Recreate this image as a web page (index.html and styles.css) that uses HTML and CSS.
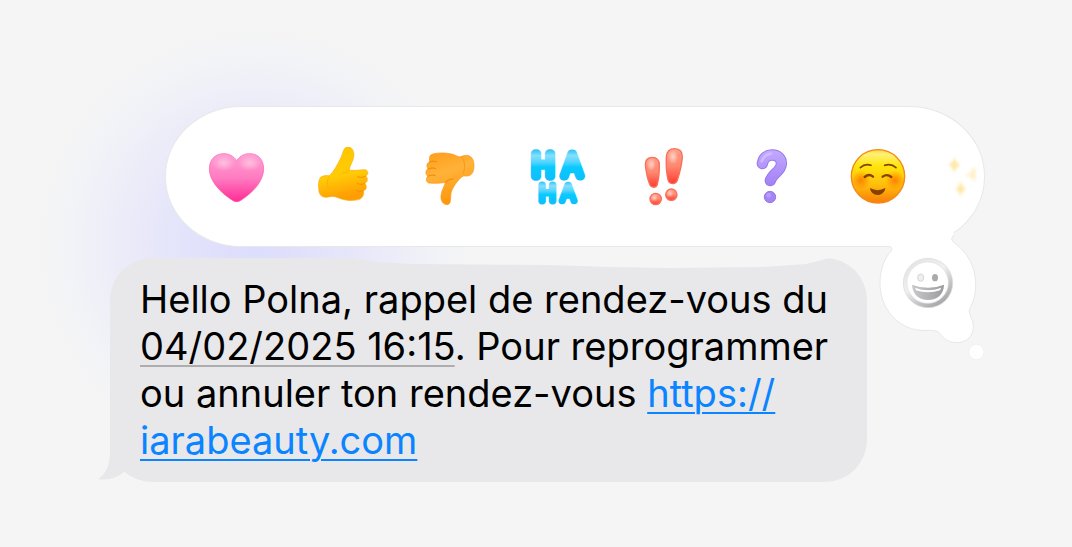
FILE: index.html
```html
<!DOCTYPE html>
<html lang="fr">
<head>
<meta charset="utf-8">
<meta name="viewport" content="width=device-width, initial-scale=1">
<title>Rappel de rendez-vous</title>
<link rel="stylesheet" href="styles.css">
</head>
<body>
<main class="stage">
  <div class="reactions">
    <button class="reaction" type="button" aria-label="Cœur">
      <svg class="icon" viewBox="48 51 180 180" aria-hidden="true">
        <defs>
          <linearGradient id="heart" x1="0" y1="0" x2="0" y2="1"><stop offset="0" stop-color="#ff9fd3"/><stop offset=".5" stop-color="#ff7cc1"/><stop offset="1" stop-color="#ff2c94"/></linearGradient>
          <radialGradient id="heartGlow"><stop offset="0" stop-color="#ffc0df"/><stop offset="1" stop-color="#ffc0df" stop-opacity="0"/></radialGradient>
        </defs>
        <path fill="url(#heart)" stroke="#f95fb0" stroke-width="2" d="M140 92C130 77 116 70 98 71C74 72 58 90 58 117C58 153 92 189 129 212Q140 219 151 212C188 189 221 153 221 117C221 90 206 72 182 71C164 70 150 77 140 92Z"/>
        <ellipse cx="101" cy="99" rx="34" ry="24" fill="url(#heartGlow)"/><ellipse cx="179" cy="99" rx="34" ry="24" fill="url(#heartGlow)"/>
      </svg>
    </button>
    <button class="reaction" type="button" aria-label="J’aime">
      <svg class="icon" viewBox="369 51 180 180" aria-hidden="true">
        <defs><linearGradient id="up" x1="0" y1="0" x2=".2" y2="1"><stop offset="0" stop-color="#ffc500"/><stop offset=".6" stop-color="#ffcb05"/><stop offset="1" stop-color="#ff9d05"/></linearGradient></defs>
        <path fill="url(#up)" stroke="#faad08" stroke-width="2" d="M388 149C391 138 402 136 418 137C431 126 444 101 454 80C459 68 461 53 471 51C486 49 494 65 491 80C489 94 480 107 477 120C494 123 515 119 525 119C536 121 536 134 527 138C535 144 533 157 524 160C532 167 530 180 520 182C523 192 519 204 508 208C489 214 465 212 444 203C434 199 425 198 415 201C399 205 386 197 386 175C385 163 386 155 388 149Z"/>
        <g fill="none" stroke="#ee9200" stroke-linecap="round" stroke-width="3"><path d="M526 139C517 143 509 143 503 140M524 161C515 165 507 163 502 160M519 183C511 186 503 184 498 180"/><path stroke="#ffae00" d="M477 121C472 127 466 129 460 129M417 141C410 151 411 166 416 174"/></g>
      </svg>
    </button>
    <button class="reaction" type="button" aria-label="Je n’aime pas">
      <svg class="icon" viewBox="63 51 180 180" aria-hidden="true">
        <defs><linearGradient id="down" x1="0" y1="0" x2=".3" y2="1"><stop offset="0" stop-color="#ff9d17"/><stop offset=".45" stop-color="#ffb239"/><stop offset="1" stop-color="#ff970b"/></linearGradient></defs>
        <path fill="url(#down)" stroke="#f99a1c" stroke-width="2" d="M94 76C105 67 139 67 162 73C172 77 180 83 188 79C207 71 221 80 224 96C227 112 224 130 213 136C204 141 195 135 189 140C174 153 160 173 156 190C154 207 157 221 146 224C132 225 124 212 126 196C128 180 136 170 139 157C126 160 106 161 89 159C80 156 80 144 87 139C78 134 79 120 87 116C81 109 83 98 92 96C91 88 91 80 94 76Z"/>
        <g fill="none" stroke="#ee8600" stroke-width="3" stroke-linecap="round"><path d="M92 96C100 92 108 93 113 96M87 117C96 113 104 113 110 116M87 139C96 134 103 134 109 137"/><path d="M139 157C146 150 154 147 162 147"/><path stroke="#f79819" d="M188 81C199 95 199 115 193 130"/></g>
      </svg>
    </button>
    <button class="reaction" type="button" aria-label="HA HA">
      <svg class="icon laugh" viewBox="381 51 180 180" aria-hidden="true">
        <defs>
          <linearGradient id="haTop" gradientUnits="userSpaceOnUse" x1="0" y1="60" x2="0" y2="153"><stop offset="0" stop-color="#30c5f8"/><stop offset=".18" stop-color="#86dffb"/><stop offset=".4" stop-color="#50d4ff"/><stop offset=".55" stop-color="#08caff"/><stop offset="1" stop-color="#10bdfb"/></linearGradient>
          <linearGradient id="haBottom" gradientUnits="userSpaceOnUse" x1="0" y1="155" x2="0" y2="225"><stop offset="0" stop-color="#30c5f8"/><stop offset=".18" stop-color="#86dffb"/><stop offset=".4" stop-color="#50d4ff"/><stop offset=".55" stop-color="#08caff"/><stop offset="1" stop-color="#10bdfb"/></linearGradient>
        </defs>
        <text class="laugh-large" y="138" fill="url(#haTop)" stroke="url(#haTop)"><tspan class="letter-h" x="397">H</tspan><tspan class="letter-a" x="488">A</tspan></text>
        <text class="laugh-small" y="214" fill="url(#haBottom)" stroke="url(#haBottom)"><tspan class="letter-h" x="418">H</tspan><tspan class="letter-a" x="483">A</tspan></text>
      </svg>
    </button>
    <button class="reaction" type="button" aria-label="Exclamation">
      <svg class="icon" viewBox="42 51 180 180" aria-hidden="true">
        <defs><linearGradient id="red" x1="0" y1="0" x2="0" y2="1"><stop offset="0" stop-color="#ff9d87"/><stop offset=".5" stop-color="#ff8870"/><stop offset="1" stop-color="#ff3b30"/></linearGradient><radialGradient id="redGlow"><stop offset="0" stop-color="#ffd2c8"/><stop offset="1" stop-color="#ffd2c8" stop-opacity="0"/></radialGradient></defs>
        <g fill="url(#red)" stroke="#f96f5b" stroke-width="4">
          <path d="M76 104C75 90 84 82 97 82C110 82 119 90 118 106C118 126 115 151 112 163C109 174 94 175 89 163C82 145 78 123 76 104Z"/>
          <path d="M139 81C140 65 150 56 164 56C180 56 188 66 187 82C185 105 178 132 172 151C167 165 147 164 144 149C139 128 138 101 139 81Z"/>
          <circle cx="107" cy="207" r="17"/><circle cx="154" cy="194" r="17"/>
        </g>
        <ellipse cx="94" cy="103" rx="14" ry="20" fill="url(#redGlow)"/><ellipse cx="159" cy="80" rx="16" ry="24" fill="url(#redGlow)"/><circle cx="103" cy="203" r="11" fill="url(#redGlow)"/><circle cx="150" cy="190" r="11" fill="url(#redGlow)"/>
      </svg>
    </button>
    <button class="reaction" type="button" aria-label="Question">
      <svg class="icon" viewBox="363 51 180 180" aria-hidden="true">
        <defs><linearGradient id="violet" gradientUnits="userSpaceOnUse" x1="0" y1="60" x2="0" y2="175"><stop offset="0" stop-color="#c3a9ff"/><stop offset="1" stop-color="#a07df4"/></linearGradient></defs>
        <g fill="none" stroke-linecap="round" stroke-linejoin="round">
          <path stroke="#9678e8" stroke-width="34" d="M427 101C430 85 439 76 455 75C473 74 485 86 484 102C483 124 457 131 451 152"/>
          <path stroke="url(#violet)" stroke-width="28" d="M427 101C430 85 439 76 455 75C473 74 485 86 484 102C483 124 457 131 451 152"/>
          <path stroke="#d8c5ff" stroke-opacity=".7" stroke-width="8" d="M425 94C430 80 438 73 453 71"/>
        </g>
        <circle cx="450" cy="201" r="17" fill="#a585f5" stroke="#9678e8" stroke-width="3"/><circle cx="446" cy="196" r="7" fill="#c5afff" opacity=".6"/>
      </svg>
    </button>
    <button class="reaction" type="button" aria-label="Sourire">
      <svg class="icon" viewBox="54 171 180 180" aria-hidden="true">
        <defs><linearGradient id="face" x1="0" y1="0" x2="0" y2="1"><stop offset="0" stop-color="#ffd72d"/><stop offset=".08" stop-color="#fff078"/><stop offset=".3" stop-color="#ffe60d"/><stop offset=".65" stop-color="#ffbf0b"/><stop offset="1" stop-color="#f87d09"/></linearGradient><radialGradient id="cheek"><stop offset="0" stop-color="#ff7900" stop-opacity=".9"/><stop offset="1" stop-color="#ff7900" stop-opacity="0"/></radialGradient></defs>
        <circle cx="144" cy="259" r="80" fill="url(#face)" stroke="#f68818" stroke-width="4"/>
        <circle cx="92" cy="271" r="29" fill="url(#cheek)"/><circle cx="195" cy="271" r="29" fill="url(#cheek)"/>
        <g fill="none" stroke="#874000" stroke-linecap="round" stroke-width="5"><path d="M91 233Q105 220 123 226M164 226Q184 220 198 233"/><path stroke-width="7" d="M104 261Q117 250 129 260M158 260Q171 250 184 261"/></g>
        <path fill="#874000" d="M120 294Q143 307 166 294C165 307 154 315 143 315C131 315 121 306 120 294Z"/>
      </svg>
    </button>
    <span class="sparkle">
      <svg class="icon" viewBox="295 171 180 180" aria-hidden="true">
        <g class="sparkle-stars" fill="#ffe8a7"><path d="M374 200Q378 218 392 224Q379 231 374 249Q369 231 357 224Q370 218 374 200Z"/><path d="M393 272Q397 290 409 296Q398 302 393 320Q388 302 377 296Q389 290 393 272Z"/><path opacity=".6" d="M430 233L438 235V278Q430 263 405 256Q425 250 430 233Z"/></g>
      </svg>
    </span>
    <div class="thought">
      <svg class="thought-shape" viewBox="120 390 360 426" aria-hidden="true">
        <path fill="#fff" d="M168 463L180 470Q188 473 184 482C164 504 150 538 150 581C150 651 199 714 270 721C288 723 311 718 324 725C334 734 345 758 381 758C411 758 430 737 430 711C430 686 416 678 418 659C430 638 437 611 437 584C437 530 413 487 368 454Q361 447 369 438L374 430L340 410L170 400Z"/>
        <path fill="none" stroke="#e8e8ea" stroke-width="3" d="M177 470Q189 470 184 482C164 504 150 538 150 581C150 651 199 714 270 721C288 723 311 718 324 725C334 734 345 758 381 758C411 758 430 737 430 711C430 686 416 678 418 659C430 638 437 611 437 584C437 530 413 487 368 454Q361 447 369 438L375 433"/>
        <circle cx="439" cy="786" r="23" fill="#fff" stroke="#ebebed" stroke-width="2"/>
      </svg>
      <button class="picker" type="button" aria-label="Choisir un emoji">
        <svg class="picker-icon" viewBox="215 502 156 156" aria-hidden="true">
          <defs><linearGradient id="ring" x1="0" y1="0" x2=".65" y2="1"><stop offset="0" stop-color="#e0e0e2"/><stop offset=".5" stop-color="#f0f0f1"/><stop offset=".78" stop-color="#c5c5c7"/><stop offset="1" stop-color="#a7a7a9"/></linearGradient><linearGradient id="mouth" x1="0" y1="0" x2="1" y2="0"><stop offset="0" stop-color="#c9c9cb"/><stop offset="1" stop-color="#9c9c9e"/></linearGradient></defs>
          <circle cx="293" cy="580" r="74" fill="url(#ring)" stroke="#dadadc" stroke-width="2"/><circle cx="292" cy="579" r="62" fill="#fff" stroke="#e1e1e3" stroke-width="2"/>
          <ellipse cx="271" cy="564" rx="9" ry="11" fill="#f0f0f1" stroke="#d4d4d6" stroke-width="3"/><ellipse cx="314" cy="564" rx="9" ry="11" fill="#aaaaac"/>
          <path fill="url(#mouth)" d="M245 585Q293 604 341 585C341 613 321 631 293 631C266 631 246 613 245 585Z"/><path fill="#fff" d="M254 594Q293 609 333 594L329 602Q293 614 257 602Z"/>
        </svg>
      </button>
    </div>
  </div>

  <article class="message">
    <svg class="message-tail" viewBox="0 0 40 50" aria-hidden="true"><path fill="#e8e8ea" d="M12 0V18C12 34 8 42 0 47C11 49 21 45 27 39Q33 44 40 47V0Z"/></svg>
    <p class="message-text">Hello Polna, rappel de rendez-vous du <time class="date" datetime="2025-02-04T16:15">04/02/2025 16:15</time>. Pour reprogrammer ou annuler ton rendez-vous <a class="link" href="https://iarabeauty.com">https://<wbr>iarabeauty.com</a></p>
  </article>
</main>
</body>
</html>
```

FILE: styles.css
```css
* {
  box-sizing: border-box;
}

body {
  margin: 0;
  background: #f5f5f5;
  font-family: Inter, "Liberation Sans", sans-serif;
}

.stage {
  min-height: 100vh;
  padding: 106px 87px 64px 110px;
  background: radial-gradient(circle at 255px 245px, #dcdcfd 0, #e3e3fb 70px, #ebebf9 130px, #f2f3f7 185px, #f5f5f5 220px);
}

.reactions {
  position: relative;
  display: grid;
  grid-template-columns: repeat(7, 1fr) 52px;
  align-items: center;
  justify-items: center;
  margin-left: 55px;
  padding: 40px 0 39px 16px;
  border: 1px solid #e8e8ea;
  border-radius: 76px / 70px;
  background: #fff;
}

.reaction,
.picker {
  display: flex;
  padding: 0;
  border: 0;
  background: none;
  cursor: pointer;
}

.icon {
  display: block;
  width: 60px;
  height: 60px;
}

.laugh {
  font-family: Inter, sans-serif;
  font-weight: 100;
  stroke-linejoin: round;
}

.laugh-large {
  font-size: 87px;
}

.laugh-small {
  font-size: 65px;
}

.laugh-large .letter-h {
  stroke-width: 29px;
}

.laugh-large .letter-a {
  stroke-width: 27px;
}

.laugh-small .letter-h {
  stroke-width: 21px;
}

.laugh-small .letter-a {
  stroke-width: 20px;
}

.sparkle-stars {
  filter: blur(4px);
}

.thought {
  position: absolute;
  top: 113px;
  right: -6px;
  width: 120px;
  height: 142px;
}

.thought-shape {
  display: block;
  width: 100%;
  height: 100%;
}

.picker {
  position: absolute;
  top: 37px;
  left: 32px;
}

.picker-icon {
  width: 52px;
  height: 52px;
}

.message {
  position: relative;
  isolation: isolate;
  margin: 11px 118px 0 0;
  padding: 18px 24px 18px 30px;
}

.message::before {
  content: "";
  position: absolute;
  z-index: -1;
  inset: 0;
  border-radius: 42px;
  background: #e8e8ea;
  clip-path: polygon(0 0, 32% 0, 35% 4px, 40% 6px, 58% 7px, 66% 9px, 74% 10px, 86% 9px, 92% 6px, 95% 0, 100% 0, 100% 100%, 0 100%);
}

.message-tail {
  position: absolute;
  z-index: -1;
  bottom: 0;
  left: -12px;
  width: 40px;
  height: 50px;
}

.message-text {
  margin: 0;
  color: #000;
  font-size: 38px;
  line-height: 47px;
}

.date,
.link {
  text-decoration-line: underline;
  text-decoration-thickness: 2px;
  text-underline-offset: 5px;
}

.date {
  text-decoration-color: #adadaf;
}

.link {
  color: #0a84ff;
}
```
